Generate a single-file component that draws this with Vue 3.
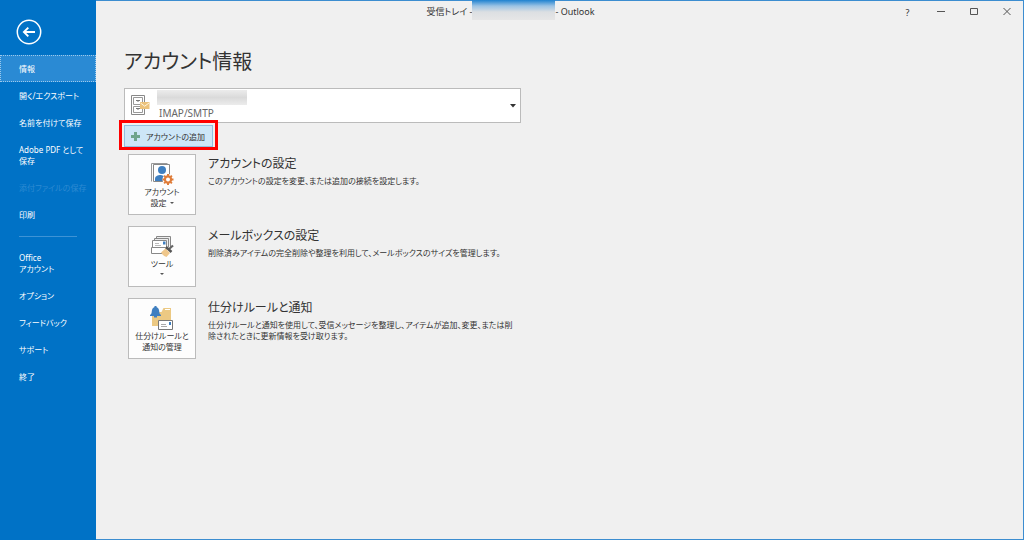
<script setup>
const navTop = [
  { lines: ['情報'], active: true },
  { lines: ['開く/エクスポート'] },
  { lines: ['名前を付けて保存'] },
  { lines: ['Adobe PDF として', '保存'] },
  { lines: ['添付ファイルの保存'], disabled: true },
  { lines: ['印刷'] },
]
const navBottom = [
  { lines: ['Office', 'アカウント'] },
  { lines: ['オプション'] },
  { lines: ['フィードバック'] },
  { lines: ['サポート'] },
  { lines: ['終了'] },
]
</script>

<template>
  <div class="window">
    <aside class="sidebar">
      <button class="back" aria-label="戻る">
        <svg viewBox="0 0 26 26" width="26" height="26" fill="none" stroke="#fff">
          <circle cx="13" cy="13" r="11.7" stroke-width="1.5" />
          <path d="M19 13H8M12.3 8.6L7.9 13l4.4 4.4" stroke-width="1.9" />
        </svg>
      </button>
      <nav>
        <button
          v-for="item in navTop"
          :key="item.lines[0]"
          class="nav-item"
          :class="{ active: item.active }"
          :disabled="item.disabled"
        >
          <span v-for="line in item.lines" :key="line">{{ line }}</span>
        </button>
        <hr class="separator" />
        <button v-for="item in navBottom" :key="item.lines[0]" class="nav-item">
          <span v-for="line in item.lines" :key="line">{{ line }}</span>
        </button>
      </nav>
    </aside>

    <div class="content">
      <header class="titlebar">
        <div class="caption">
          <span>受信トレイ -</span>
          <span class="masked-title"></span>
          <span>- Outlook</span>
        </div>
        <div class="controls">
          <button aria-label="ヘルプ">?</button>
          <button aria-label="最小化">
            <svg viewBox="0 0 10 10" width="10" height="10"><path d="M1 4.500h8" /></svg>
          </button>
          <button aria-label="最大化">
            <svg viewBox="0 0 10 10" width="10" height="10"><path d="M1.500 1.500h7v6h-7z" /></svg>
          </button>
          <button aria-label="閉じる">
            <svg viewBox="0 0 10 10" width="10" height="10"><path d="M1.500 1l7 7M8.500 1l-7 7" /></svg>
          </button>
        </div>
      </header>

      <main>
        <h1>アカウント情報</h1>

        <div class="account">
          <select aria-label="アカウント">
            <option>IMAP/SMTP</option>
          </select>
          <svg class="cabinet" viewBox="0 0 20 22" width="20" height="22" fill="none">
            <path d="M1.500 1.500h13v19h-13z" fill="#fff" stroke="#888" />
            <path d="M3.500 3.500h9v7h-9zM3.500 12.500h9v6h-9z" stroke="#999" />
            <path d="M6 6.500h4M6 14.500h4" stroke="#777" />
            <path d="M7.500 7.500h1M7.500 15.500h1" stroke="#777" />
            <path d="M10 8h9.500v7H10z" fill="#ecc27a" />
            <path d="M10.500 9l4.200 3.200L19 9" stroke="#fff6df" />
          </svg>
          <span class="masked-name"></span>
          <svg class="arrow" viewBox="0 0 6 4" width="6" height="4"><path d="M0 0h6L3 3.500z" fill="#333" /></svg>
        </div>

        <div class="add-row">
          <button class="add">
            <svg viewBox="0 0 9 9" width="9" height="9"><path d="M3 0h3v3h3v3H6v3H3V6H0V3h3z" fill="#6fa58c" /></svg>
            <span>アカウントの追加</span>
          </button>
        </div>

        <section>
          <button class="tile">
            <svg viewBox="0 0 24 24" width="24" height="24" fill="none">
              <path d="M1.500 19.500v-18h16" stroke="#999" />
              <path d="M3.500 2.500h16v17h-16z" fill="#fff" stroke="#888" />
              <circle cx="12" cy="8" r="4" fill="#3f7fc0" />
              <path d="M5 19v-2c0-3 2.500-4 6-4l3 1v5z" fill="#3f7fc0" />
              <circle cx="18" cy="17.500" r="5.500" fill="#fff" />
              <circle cx="18" cy="17.500" r="3.100" stroke="#df7d3a" stroke-width="2.200" />
              <path d="M18 12v2.500M18 20.500V23M12.500 17.500H15M21 17.500h2.500M14.100 13.600l1.800 1.800M20.100 19.600l1.800 1.800M21.900 13.600l-1.800 1.800M15.900 19.600l-1.800 1.800" stroke="#df7d3a" stroke-width="2" />
            </svg>
            <span>アカウント</span>
            <span class="with-arrow">設定<i class="caret"></i></span>
          </button>
          <div class="info">
            <h2>アカウントの設定</h2>
            <p>このアカウントの設定を変更、または追加の接続を設定します。</p>
          </div>
        </section>

        <section>
          <button class="tile">
            <svg viewBox="0 0 24 24" width="24" height="24" fill="none">
              <path d="M6.500 5V2.500h14V13M4.500 7V4.500h14V13" fill="#eee" stroke="#888" />
              <path d="M2.500 6.500h14v8h-14z" fill="#fff" stroke="#888" />
              <path d="M5 9.500h4M5 11.500h6" stroke="#bbb" />
              <path d="M13 7.500h2.500v3H13z" fill="#3f7fc0" />
              <path d="M1.500 13.500h14l2 6h-16z" fill="#fff" stroke="#888" />
              <path d="M23 11.500l-4.500 4" stroke="#666" stroke-width="2.200" />
              <path d="M16 13l5.500 5" stroke="#555" stroke-width="2.500" />
              <path d="M15.500 14.500l4.500 4.500-3.500 4c-2-.5-4-2-5.500-4.500z" fill="#efc78b" />
            </svg>
            <span>ツール</span>
            <i class="caret below"></i>
          </button>
          <div class="info">
            <h2>メールボックスの設定</h2>
            <p>削除済みアイテムの完全削除や整理を利用して、メールボックスのサイズを管理します。</p>
          </div>
        </section>

        <section>
          <button class="tile">
            <svg viewBox="0 0 24 24" width="24" height="24" fill="none">
              <path d="M2 6h9.500l2-4H21v18H2z" fill="#ecc983" />
              <path d="M15 3.500h5" stroke="#fff" />
              <path d="M0 9c2-1 1.500-3 2-5C2.500 2 3.500 1.500 4.500 1V0h2v1c1 .5 2 1 2.500 3 .5 2 0 4 2 5v1H0z" fill="#3f7fc0" />
              <path d="M4 10h3v1.500H4z" fill="#3f7fc0" />
              <path d="M8.500 14.500h14v9h-14z" fill="#fff" stroke="#777" />
              <path d="M11 18.500h5M11 20.500h6" stroke="#aaa" />
              <path d="M19 16h2v3h-2z" fill="#3f7fc0" />
            </svg>
            <span>仕分けルールと</span>
            <span>通知の管理</span>
          </button>
          <div class="info">
            <h2>仕分けルールと通知</h2>
            <p>仕分けルールと通知を使用して、受信メッセージを整理し、アイテムが追加、変更、または削除されたときに更新情報を受け取ります。</p>
          </div>
        </section>
      </main>
    </div>
  </div>
</template>

<style>
body {
  background: #f0f0f0;
}
</style>

<style scoped>
.window {
  display: flex;
  min-height: 100vh;
  box-sizing: border-box;
  color: #333;
  font: 8px/11px "Noto Sans", "Noto Sans CJK JP", sans-serif;
  font-feature-settings: "palt";
}
button,
select {
  font: inherit;
  font-feature-settings: inherit;
  color: inherit;
  margin: 0;
  padding: 0;
  border: 0;
  background: none;
}
.sidebar {
  flex: 0 0 96px;
  background: #0072c6;
  color: #fff;
}
.back {
  display: block;
  width: 26px;
  height: 26px;
  margin: 19px 0 10px 16px;
}
.nav-item {
  display: flex;
  flex-direction: column;
  width: 100%;
  padding: 8px 0 8px 19px;
  text-align: left;
  white-space: nowrap;
}
.nav-item.active {
  background: #2a8ad4;
  outline: 1px dotted #9cc9ec;
  outline-offset: -1px;
}
.nav-item:disabled {
  color: #2d8ad2;
}
.separator {
  height: 1px;
  margin: 8px 19px 7px;
  border: 0;
  background: #3d93d6;
}
.content {
  flex: 1;
  min-width: 0;
  border: 1px solid #3c8dd0;
  border-left: 0;
}
.titlebar {
  position: relative;
  display: flex;
  justify-content: center;
  height: 24px;
  font-size: 9px;
}
.caption {
  display: flex;
  line-height: 22px;
  margin-right: 98px;
}
.masked-title {
  width: 83px;
  height: 20px;
  margin: -1px 0 0;
  background: linear-gradient(#1f82d0, #9cc3e4 30%, #dcdfe2 60%, #e6e6e6);
}
.controls {
  position: absolute;
  top: 0;
  right: 0;
  display: flex;
}
.controls button {
  display: flex;
  align-items: center;
  justify-content: center;
  width: 33px;
  height: 22px;
}
.controls path {
  fill: none;
  stroke: #555;
}
main {
  max-width: 397px;
  padding: 22px 20px 0 28px;
}
h1,
h2,
p {
  margin: 0;
  font-weight: 400;
}
h1 {
  font-size: 20px;
  line-height: 30px;
}
.account {
  position: relative;
  margin-top: 11px;
}
.account select {
  display: block;
  width: 100%;
  height: 35px;
  padding: 15px 0 0 34px;
  border: 1px solid #bbb;
  border-radius: 0;
  background: #fff;
  color: #666;
  font-size: 10px;
  appearance: none;
}
.cabinet {
  position: absolute;
  left: 6px;
  top: 6px;
}
.masked-name {
  position: absolute;
  left: 33px;
  top: 2px;
  width: 90px;
  height: 15px;
  background: linear-gradient(#ececec, #dadada 50%, #ececec);
}
.arrow {
  position: absolute;
  right: 5px;
  top: 16px;
}
.add-row {
  position: relative;
  width: fit-content;
  padding: 2px 0 7px;
}
.add-row::after {
  content: "";
  position: absolute;
  inset: -3px -5px 4px;
  border: 3px solid #f00;
  pointer-events: none;
}
.add {
  display: flex;
  align-items: center;
  gap: 6px;
  min-width: 89px;
  height: 22px;
  padding: 0 6px;
  border: 1px solid #92bfe0;
  background: #cde6f7;
  white-space: nowrap;
}
section {
  display: flex;
  gap: 12px;
  margin: 0 0 11px 4px;
}
.tile {
  display: flex;
  flex: 0 0 68px;
  flex-direction: column;
  align-items: center;
  box-sizing: border-box;
  height: 61px;
  padding-top: 7px;
  border: 1px solid #bbb;
  background: #fdfdfd;
  white-space: nowrap;
}
.with-arrow {
  display: flex;
  align-items: center;
  gap: 3px;
}
.caret {
  border: 2px solid transparent;
  border-top-color: #555;
  border-bottom: 0;
}
.below {
  margin-top: 4px;
}
.info {
  flex: 1;
  min-width: 0;
  padding-right: 8px;
}
h2 {
  font-size: 12px;
  line-height: 20px;
}
p {
  margin-top: 1px;
}
</style>
